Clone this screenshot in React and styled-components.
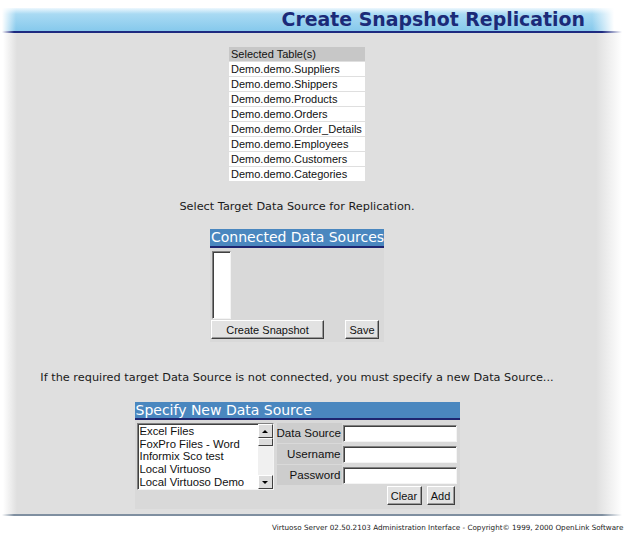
import React from 'react'
import styled, { createGlobalStyle } from 'styled-components'

const Global = createGlobalStyle`
  body {
    margin: 0;
    background: #fff;
    font-family: "DejaVu Sans", Verdana, sans-serif;
  }
`
const Page = styled.div`
  width: 626px;
  height: 546px;
  overflow: hidden;
  padding-top: 8px;
  box-sizing: border-box;
`
const TitleBar = styled.div`
  height: 23px;
  display: flex;
  justify-content: flex-end;
  align-items: flex-end;
  padding-right: 41px;
  background:
    linear-gradient(to right, #fff 2px, rgba(255,255,255,0) 16px, rgba(255,255,255,0) calc(100% - 34px), #fff calc(100% - 12px)),
    linear-gradient(to bottom, #eef8fe 0, #a9daf3 6px, #86c9ec 100%);
  h1 {
    margin: 0 0 1px;
    font-size: 18.9px;
    line-height: 22px;
    font-weight: bold;
    color: #1b2a78;
  }
`
const Rule = styled.div`
  height: ${p => p.$h || 2}px;
  background: linear-gradient(to right, rgba(255,255,255,0) 2px, ${p => p.$c} 14px, ${p => p.$c} calc(100% - 24px), rgba(255,255,255,0) calc(100% - 4px));
`
const Panel = styled.div`
  height: 481px;
  background: linear-gradient(to right, #fff 3px, #dfdfdf 17px, #dfdfdf 596px, #fff 622px);
`
const Content = styled.div`
  width: 594px;
  display: flex;
  flex-direction: column;
  align-items: center;
  padding-top: 13px;
`
const TableList = styled.table`
  border-spacing: 1px;
  width: 138px;
  font-family: "Liberation Sans", Arial, sans-serif;
  font-size: 11px;
  color: #111;
  td, th {
    height: 14px;
    padding: 0 0 0 2px;
    text-align: left;
    font-weight: normal;
    line-height: 14px;
    white-space: nowrap;
  }
  th { background: #c7c7c7; }
  td { background: #fff; }
`
const Note = styled.p`
  margin: ${p => p.$m};
  font-size: 11.3px;
  color: #1a1a1a;
  line-height: 14px;
  white-space: nowrap;
`
const Box = styled.div`
  width: ${p => p.$w}px;
  background: #d9d9d9;
  padding-bottom: ${p => p.$pb}px;
`
const BoxHead = styled.div`
  background: #4a87bf;
  color: #fff;
  font-size: 14px;
  height: ${p => p.$h}px;
  line-height: ${p => p.$h}px;
  padding-left: 1px;
  border-bottom: 2px solid #1e2570;
  white-space: nowrap;
  overflow: hidden;
`
const Sunken = styled.div`
  background: #fff;
  border: 1px solid;
  border-color: #808080 #f4f4f4 #f4f4f4 #808080;
  box-shadow: inset 1px 1px 0 #404040;
  box-sizing: border-box;
`
const EmptyList = styled(Sunken)`
  width: 19px;
  height: 68px;
  margin: 3px 0 0 2px;
`
const ButtonRow = styled.div`
  display: flex;
  justify-content: ${p => p.$justify};
  gap: ${p => p.$gap}px;
  padding: ${p => p.$pad};
`
const Btn = styled.button`
  height: 19px;
  width: ${p => p.$w}px;
  padding: 0;
  font-family: "Liberation Sans", Arial, sans-serif;
  font-size: 11px;
  color: #111;
  background: #e2e2e2;
  border: 1px solid;
  border-color: #fff #404040 #404040 #fff;
  box-shadow: inset -1px -1px 0 #9a9a9a;
`
const FormGrid = styled.div`
  display: flex;
  gap: 3px;
  padding: 3px 0 0 2px;
`
const ListBox = styled(Sunken)`
  width: 137px;
  height: 67px;
  display: flex;
  overflow: hidden;
`
const Items = styled.div`
  flex: 1;
  padding: 1px 0 0 2px;
  font-family: "Liberation Sans", Arial, sans-serif;
  font-size: 11.3px;
  line-height: 12.7px;
  color: #111;
  white-space: nowrap;
`
const ScrollBar = styled.div`
  width: 15px;
  display: flex;
  flex-direction: column;
  background: #f0f0f0;
`
const Arrow = styled.div`
  height: 14px;
  background: #dcdcdc;
  border: 1px solid;
  border-color: #fff #404040 #404040 #fff;
  box-sizing: border-box;
  display: flex;
  align-items: center;
  justify-content: center;
  &::after {
    content: "";
    border-left: 3px solid transparent;
    border-right: 3px solid transparent;
    ${p => p.$down ? 'border-top: 3px solid #000;' : 'border-bottom: 3px solid #000;'}
  }
`
const Thumb = styled.div`
  height: 6px;
  background: #dcdcdc;
  border: 1px solid;
  border-color: #fff #404040 #404040 #fff;
`
const Track = styled.div`
  flex: 1;
`
const Fields = styled.div`
  display: flex;
  flex-direction: column;
  gap: 1px;
`
const FieldRow = styled.div`
  display: flex;
  align-items: center;
  gap: 1px;
  height: 20px;
`
const Label = styled.div`
  width: 65px;
  height: 20px;
  line-height: 20px;
  background: #cdcdcd;
  text-align: right;
  padding-right: 1px;
  box-sizing: border-box;
  font-family: "Liberation Sans", Arial, sans-serif;
  font-size: 11.6px;
  color: #111;
  white-space: nowrap;
`
const Input = styled(Sunken)`
  width: 114px;
  height: 17px;
`
const FootText = styled.div`
  padding: 7px 0 0 272px;
  font-size: 7.2px;
  color: #222;
  white-space: nowrap;
`

const tables = ['Suppliers', 'Shippers', 'Products', 'Orders', 'Order_Details', 'Employees', 'Customers', 'Categories']
const sources = ['Excel Files', 'FoxPro Files - Word', 'Informix Sco test', 'Local Virtuoso', 'Local Virtuoso Demo']
const fields = ['Data Source', 'Username', 'Password']

export default function App() {
  return (
    <Page>
      <Global />
      <TitleBar><h1>Create Snapshot Replication</h1></TitleBar>
      <Rule $c="#1e2a80" />
      <Panel>
        <Content>
          <TableList>
            <thead><tr><th>Selected Table(s)</th></tr></thead>
            <tbody>
              {tables.map(t => <tr key={t}><td>Demo.demo.{t}</td></tr>)}
            </tbody>
          </TableList>
          <Note $m="18px 0 0">Select Target Data Source for Replication.</Note>
          <Box $w={174} $pb={3} style={{ marginTop: 15 }}>
            <BoxHead $h={17}>Connected Data Sources</BoxHead>
            <EmptyList />
            <ButtonRow $justify="flex-start" $gap={21} $pad="1px 0 0 1px">
              <Btn $w={113}>Create Snapshot</Btn>
              <Btn $w={34}>Save</Btn>
            </ButtonRow>
          </Box>
          <Note $m="29px 0 0">If the required target Data Source is not connected, you must specify a new Data Source...</Note>
          <Box $w={325} $pb={4} style={{ marginTop: 17 }}>
            <BoxHead $h={16}>Specify New Data Source</BoxHead>
            <FormGrid>
              <ListBox>
                <Items>{sources.map(s => <div key={s}>{s}</div>)}</Items>
                <ScrollBar>
                  <Arrow />
                  <Thumb />
                  <Track />
                  <Arrow $down />
                </ScrollBar>
              </ListBox>
              <div>
                <Fields>
                  {fields.map(f => (
                    <FieldRow key={f}>
                      <Label>{f}</Label>
                      <Input />
                    </FieldRow>
                  ))}
                </Fields>
                <ButtonRow $justify="flex-end" $gap={5} $pad="1px 2px 0 0">
                  <Btn $w={35}>Clear</Btn>
                  <Btn $w={28}>Add</Btn>
                </ButtonRow>
              </div>
            </FormGrid>
          </Box>
        </Content>
      </Panel>
      <Rule $c="#7f8fa0" />
      <FootText>Virtuoso Server 02.50.2103 Administration Interface - Copyright© 1999, 2000 OpenLink Software</FootText>
    </Page>
  )
}
